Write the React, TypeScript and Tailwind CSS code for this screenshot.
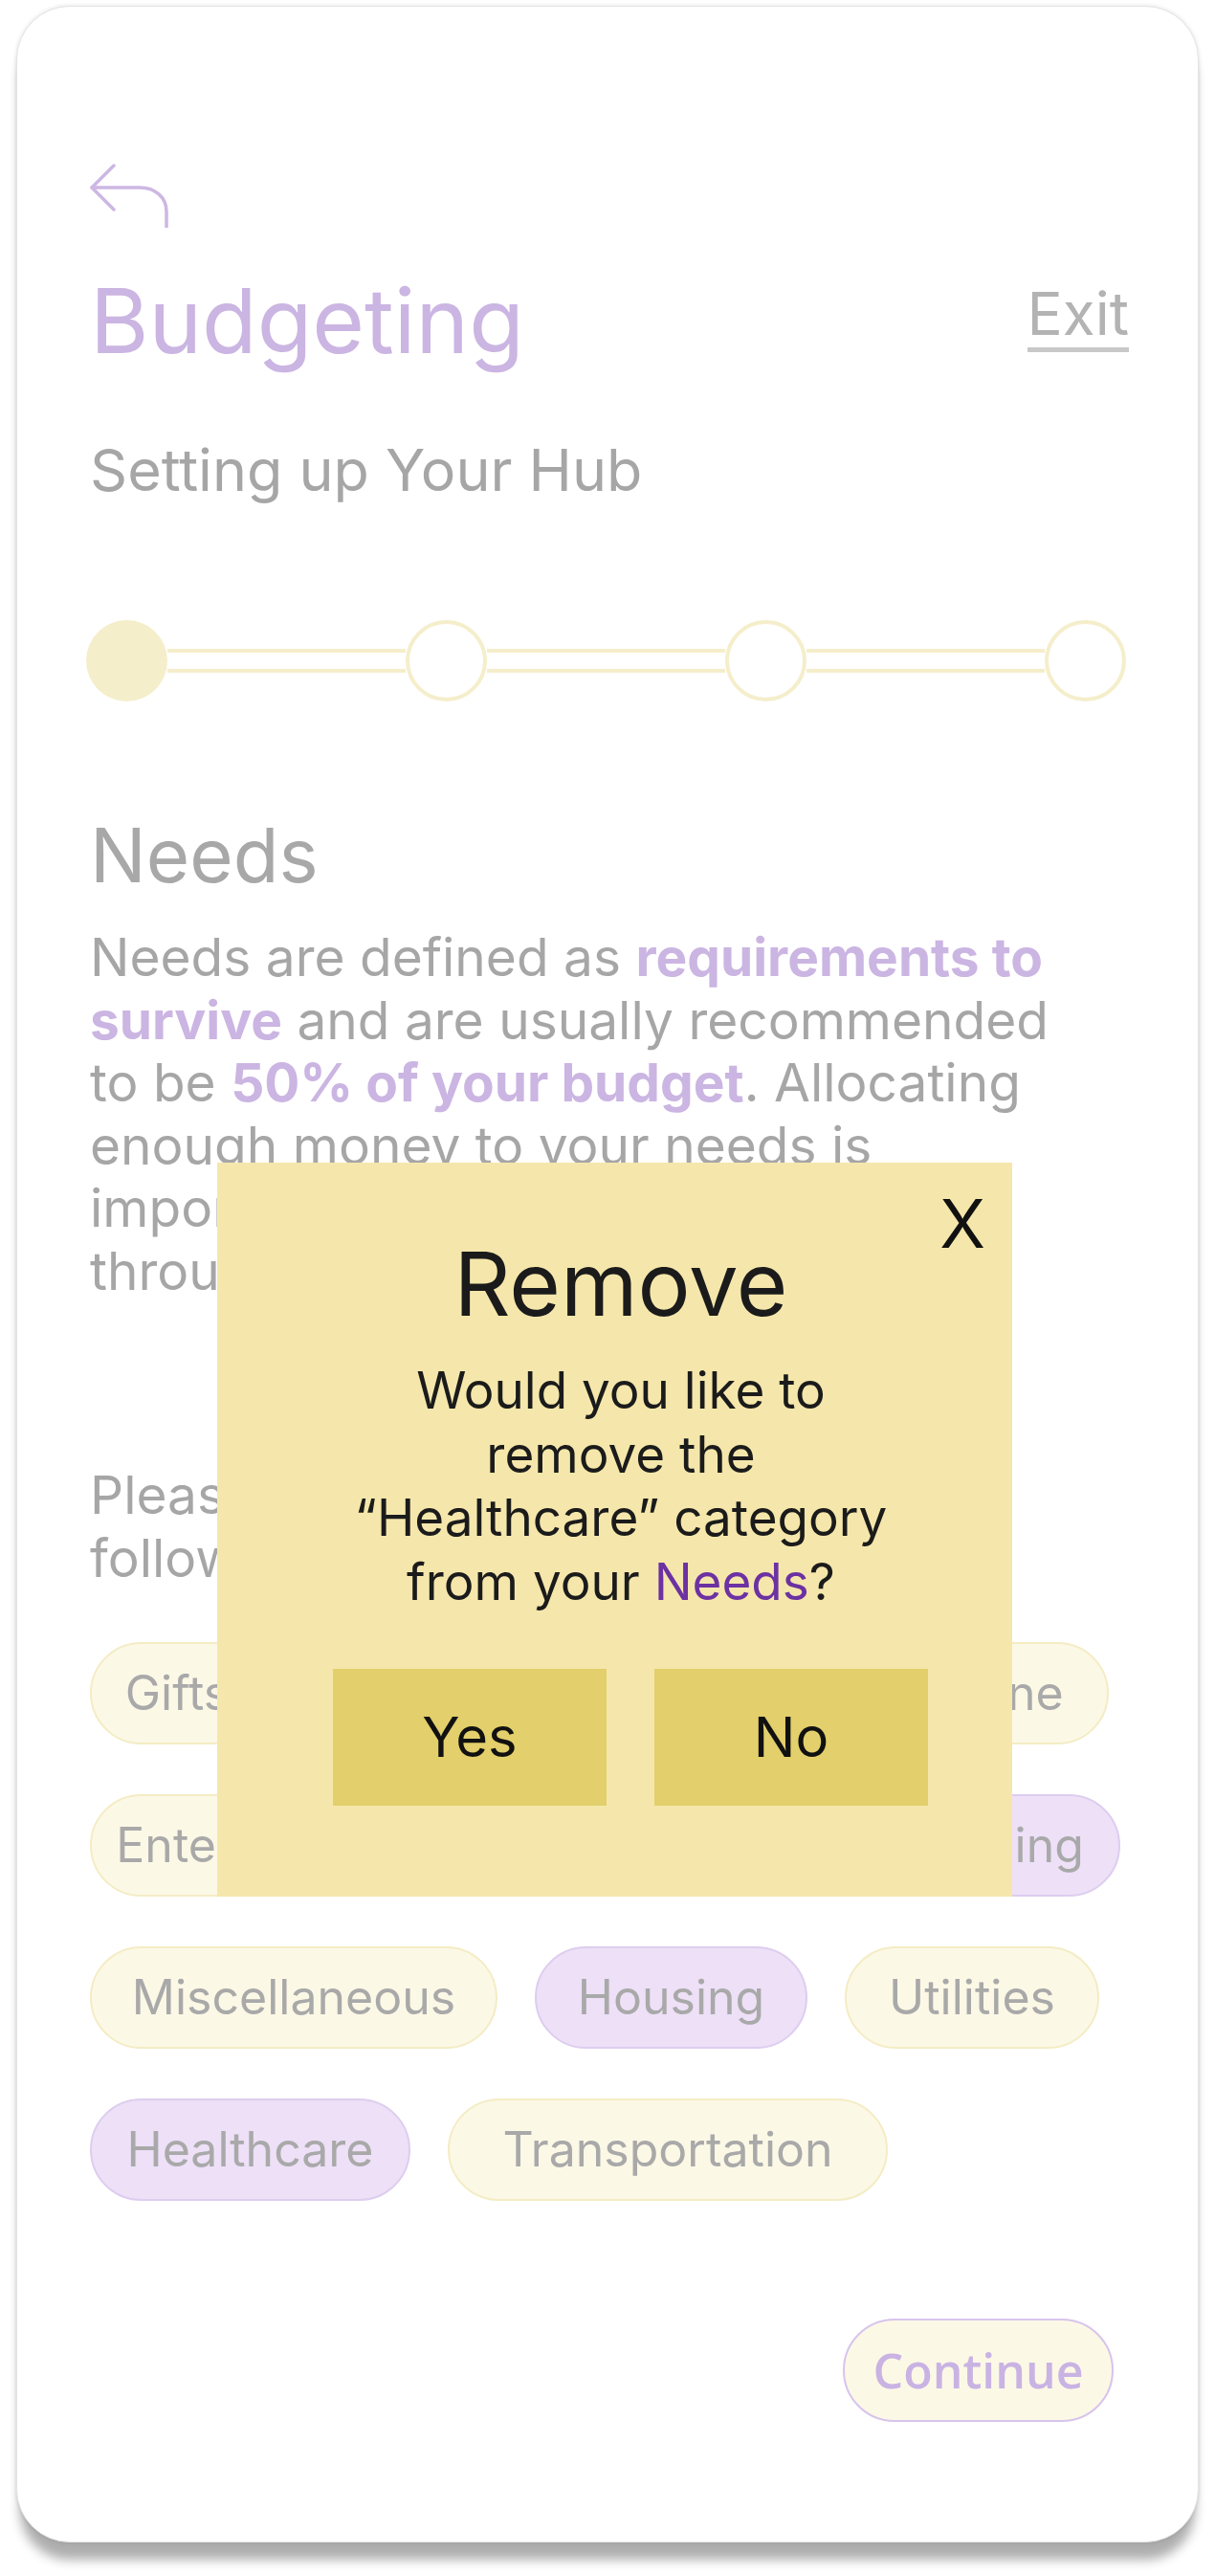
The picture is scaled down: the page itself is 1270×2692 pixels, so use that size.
import React from 'react'

type Chip = {
  label: string
  width: string
  purple?: boolean
}

type ChipRow = {
  className: string
  chips: Chip[]
}

const chipRows: ChipRow[] = [
  {
    className: 'w-[1065px] justify-between',
    chips: [
      { label: 'Gifts', width: 'w-[182px]' },
      { label: 'Groceries', width: 'w-[300px]', purple: true },
      { label: 'Phone', width: 'w-[245px]' },
    ],
  },
  {
    className: 'w-[1077px] justify-between',
    chips: [
      { label: 'Entertainment', width: 'w-[384px]' },
      { label: 'Dining', width: 'w-[219px]' },
      { label: 'Clothing', width: 'w-[273px]', purple: true },
    ],
  },
  {
    className: 'gap-x-[39px]',
    chips: [
      { label: 'Miscellaneous', width: 'w-[426px]' },
      { label: 'Housing', width: 'w-[285px]', purple: true },
      { label: 'Utilities', width: 'w-[266px]' },
    ],
  },
  {
    className: 'gap-x-[39px]',
    chips: [
      { label: 'Healthcare', width: 'w-[335px]', purple: true },
      { label: 'Transportation', width: 'w-[460px]' },
    ],
  },
]

const BackArrow = () => (
  <svg width="82" height="67" viewBox="0 0 82 67" fill="none">
    <polyline points="25,2 2,25 25,48" stroke="#cdb7e3" strokeWidth="3.5" strokeLinecap="round" strokeLinejoin="round" />
    <path d="M2 25 H52 C68 25 80 35 80 50 V67" stroke="#cdb7e3" strokeWidth="3.5" strokeLinecap="round" />
  </svg>
)

const Stepper = () => {
  const steps = [0, 1, 2, 3]
  return (
    <div className="flex items-center ml-[-4px] w-[1087px]">
      {steps.map((i) => (
        <React.Fragment key={i}>
          {i > 0 && <div className="flex-1 h-[25px] border-y-[4px] border-[#f5eecb] bg-white" />}
          <div
            className={
              i === 0
                ? 'w-[85px] h-[85px] rounded-full bg-[#f5eecb] shrink-0'
                : 'w-[85px] h-[85px] rounded-full bg-white border-[4px] border-[#f5eecb] shrink-0'
            }
          />
        </React.Fragment>
      ))}
    </div>
  )
}

const RemoveModal = () => (
  <div className="absolute left-[209px] top-[1208px] w-[831px] h-[767px] bg-[#f5e7ab] flex flex-col items-center pt-[81px] pl-[13px]">
    <span className="absolute top-[29px] right-[28px] text-[70px] font-normal leading-none text-[#111]">X</span>
    <h2 className="text-[92px] leading-none text-[#1b1b1b]">Remove</h2>
    <p className="mt-[32px] text-[53px] leading-[66.7px] text-center text-[#1b1b1b]">
      Would you like to
      <br />
      remove the
      <br />
      “Healthcare” category
      <br />
      from your <span className="text-[#6c31a2]">Needs</span>?
    </p>
    <div className="mt-[57px] ml-[20px] flex gap-x-[50px]">
      <button className="w-[286px] h-[143px] bg-[#e3cf6b] text-[58px] text-[#111]">Yes</button>
      <button className="w-[286px] h-[143px] bg-[#e3cf6b] text-[58px] text-[#111]">No</button>
    </div>
  </div>
)

const App = () => {
  return (
    <div className="min-h-[2692px] bg-white pt-[6px]">
      <div className="relative ml-[17px] w-[1236px] h-[2651px] rounded-[56px] bg-white border border-[#e4e4e4] shadow-[0_22px_12px_-4px_rgba(0,0,0,0.32),0_0_4px_rgba(0,0,0,0.12)] pl-[76px] pr-[72px] pt-[164px] font-['Inter',sans-serif]">
        <BackArrow />

        <div className="mt-[50px] flex items-start justify-between">
          <h1 className="text-[94px] leading-none text-[#cbb5e2]">Budgeting</h1>
          <span className="mt-[9px] text-[62px] leading-none text-[#b3b3b3] border-b-[5px] border-[#c8c8c8] pb-[4px]">
            Exit
          </span>
        </div>

        <h3 className="mt-[79px] text-[61px] leading-none text-[#a6a6a6]">Setting up Your Hub</h3>

        <div className="mt-[126px]">
          <Stepper />
        </div>

        <h2 className="mt-[122px] text-[78px] leading-none text-[#a8a8a8]">Needs</h2>

        <p className="mt-[35px] text-[55px] leading-[65.5px] text-[#a6a6a6]">
          Needs are defined as <span className="font-bold text-[#cbb5e2]">requirements to</span>
          <br />
          <span className="font-bold text-[#cbb5e2]">survive</span> and are usually recommended
          <br />
          to be <span className="font-bold text-[#cbb5e2]">50% of your budget</span>. Allocating
          <br />
          enough money to your needs is
          <br />
          important to make sure you can get
          <br />
          through each month comfortably.
        </p>

        <p className="mt-[168px] text-[55px] leading-[66px] text-[#a6a6a6]">
          Please select your needs from the
          <br />
          following categories below:
        </p>

        <div className="mt-[55px] flex flex-col gap-y-[52px]">
          {chipRows.map((row, idx) => (
            <div key={idx} className={`flex ${row.className}`}>
              {row.chips.map((chip) => (
                <div
                  key={chip.label}
                  className={
                    chip.purple
                      ? `${chip.width} h-[107px] rounded-full border-2 border-[#ddcdef] bg-[#ede0f7] flex items-center justify-center text-[50px] text-[#a9a9a9]`
                      : `${chip.width} h-[107px] rounded-full border-2 border-[#f4ecc4] bg-[#fcf8e6] flex items-center justify-center text-[50px] text-[#a9a9a9]`
                  }
                >
                  {chip.label}
                </div>
              ))}
            </div>
          ))}
        </div>

        <div className="mt-[123px] flex justify-end pr-[16px]">
          <button className="w-[283px] h-[108px] rounded-full border-2 border-[#d7c4ec] bg-[#fcf8e6] text-[50px] font-semibold text-[#c9b3e3] font-['Open_Sans',sans-serif]">
            Continue
          </button>
        </div>

        <RemoveModal />
      </div>
    </div>
  )
}

export default App
